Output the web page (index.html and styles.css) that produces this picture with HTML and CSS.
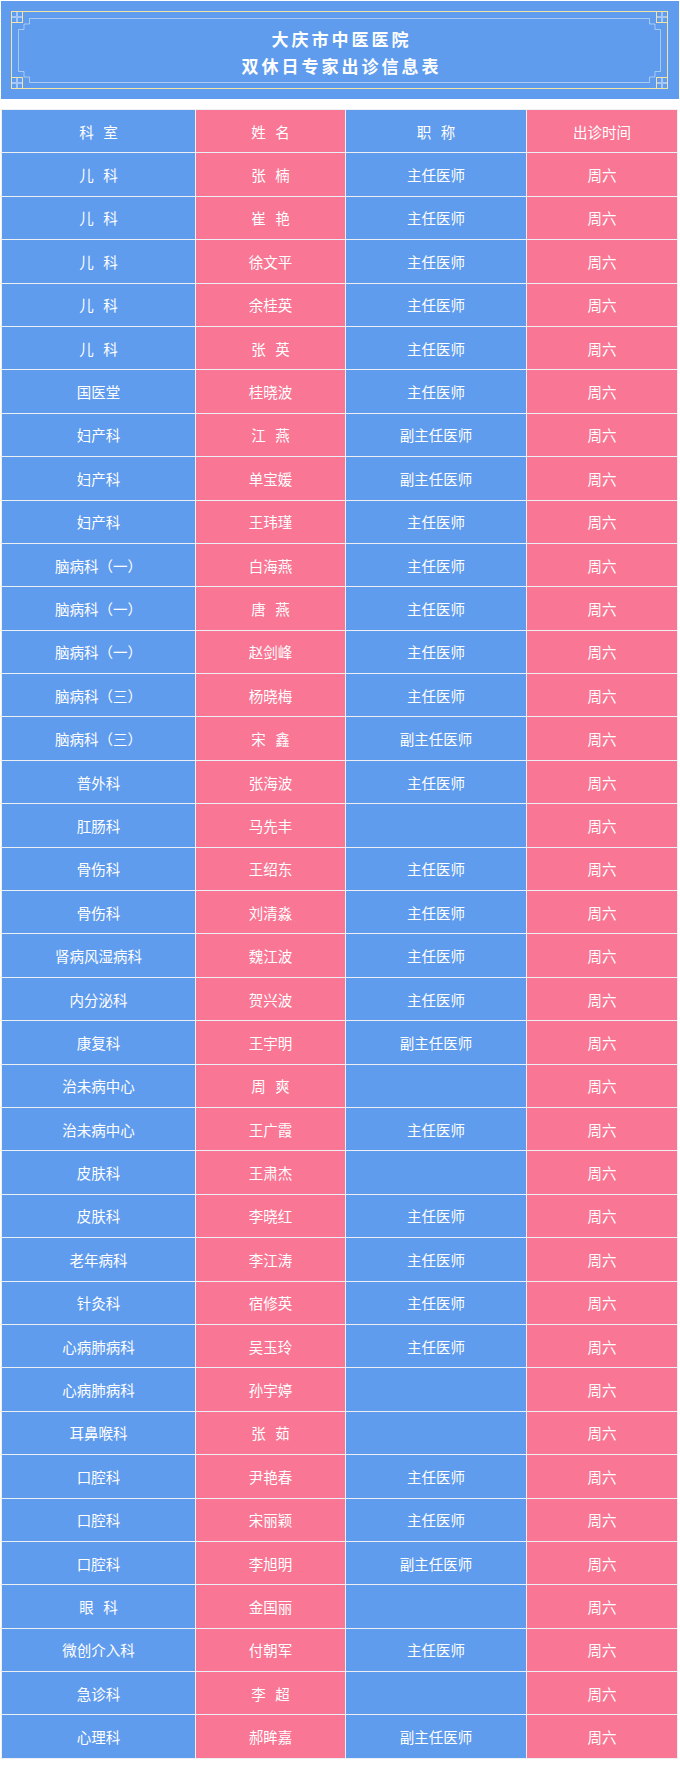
FILE: index.html
```html
<!DOCTYPE html>
<html lang="zh-CN">
<head>
<meta charset="utf-8">
<title>大庆市中医医院 双休日专家出诊信息表</title>
<link rel="stylesheet" href="styles.css">
</head>
<body>
<header class="banner">
  <svg class="frame" width="678" height="98" viewBox="0 0 678 98" aria-hidden="true">
    <path class="inner" d="M28.5 17.5 H648.5 V23 H654 V28.5 H659.5 V70.5 H654 V76 H648.5 V81.5 H28.5 V76 H23 V70.5 H17.5 V28.5 H23 V23 H28.5 Z"/>
    <path class="cross" d="M10.5 16 H21.5 M16 10.5 V21.5 M655.5 16 H666.5 M661 10.5 V21.5 M10.5 82 H21.5 M16 76.5 V87.5 M655.5 82 H666.5 M661 76.5 V87.5"/>
    <path class="outer" d="M21.5 10.5 H655.5 M21.5 87.5 H655.5 M10.5 21.5 V76.5 M666.5 21.5 V76.5"/>
    <rect class="outer" x="10.5" y="10.5" width="11" height="11"/>
    <rect class="outer" x="655.5" y="10.5" width="11" height="11"/>
    <rect class="outer" x="10.5" y="76.5" width="11" height="11"/>
    <rect class="outer" x="655.5" y="76.5" width="11" height="11"/>
  </svg>
  <h1 class="title"><span>大庆市中医医院</span><span>双休日专家出诊信息表</span></h1>
</header>

<div class="sheet">
  <div class="cell b">科 室</div><div class="cell p">姓 名</div><div class="cell b">职 称</div><div class="cell p">出诊时间</div>
  <div class="cell b">儿 科</div><div class="cell p">张 楠</div><div class="cell b">主任医师</div><div class="cell p">周六</div>
  <div class="cell b">儿 科</div><div class="cell p">崔 艳</div><div class="cell b">主任医师</div><div class="cell p">周六</div>
  <div class="cell b">儿 科</div><div class="cell p">徐文平</div><div class="cell b">主任医师</div><div class="cell p">周六</div>
  <div class="cell b">儿 科</div><div class="cell p">余桂英</div><div class="cell b">主任医师</div><div class="cell p">周六</div>
  <div class="cell b">儿 科</div><div class="cell p">张 英</div><div class="cell b">主任医师</div><div class="cell p">周六</div>
  <div class="cell b">国医堂</div><div class="cell p">桂晓波</div><div class="cell b">主任医师</div><div class="cell p">周六</div>
  <div class="cell b">妇产科</div><div class="cell p">江 燕</div><div class="cell b">副主任医师</div><div class="cell p">周六</div>
  <div class="cell b">妇产科</div><div class="cell p">单宝媛</div><div class="cell b">副主任医师</div><div class="cell p">周六</div>
  <div class="cell b">妇产科</div><div class="cell p">王玮瑾</div><div class="cell b">主任医师</div><div class="cell p">周六</div>
  <div class="cell b">脑病科（一）</div><div class="cell p">白海燕</div><div class="cell b">主任医师</div><div class="cell p">周六</div>
  <div class="cell b">脑病科（一）</div><div class="cell p">唐 燕</div><div class="cell b">主任医师</div><div class="cell p">周六</div>
  <div class="cell b">脑病科（一）</div><div class="cell p">赵剑峰</div><div class="cell b">主任医师</div><div class="cell p">周六</div>
  <div class="cell b">脑病科（三）</div><div class="cell p">杨晓梅</div><div class="cell b">主任医师</div><div class="cell p">周六</div>
  <div class="cell b">脑病科（三）</div><div class="cell p">宋 鑫</div><div class="cell b">副主任医师</div><div class="cell p">周六</div>
  <div class="cell b">普外科</div><div class="cell p">张海波</div><div class="cell b">主任医师</div><div class="cell p">周六</div>
  <div class="cell b">肛肠科</div><div class="cell p">马先丰</div><div class="cell b"></div><div class="cell p">周六</div>
  <div class="cell b">骨伤科</div><div class="cell p">王绍东</div><div class="cell b">主任医师</div><div class="cell p">周六</div>
  <div class="cell b">骨伤科</div><div class="cell p">刘清淼</div><div class="cell b">主任医师</div><div class="cell p">周六</div>
  <div class="cell b">肾病风湿病科</div><div class="cell p">魏江波</div><div class="cell b">主任医师</div><div class="cell p">周六</div>
  <div class="cell b">内分泌科</div><div class="cell p">贺兴波</div><div class="cell b">主任医师</div><div class="cell p">周六</div>
  <div class="cell b">康复科</div><div class="cell p">王宇明</div><div class="cell b">副主任医师</div><div class="cell p">周六</div>
  <div class="cell b">治未病中心</div><div class="cell p">周 爽</div><div class="cell b"></div><div class="cell p">周六</div>
  <div class="cell b">治未病中心</div><div class="cell p">王广霞</div><div class="cell b">主任医师</div><div class="cell p">周六</div>
  <div class="cell b">皮肤科</div><div class="cell p">王肃杰</div><div class="cell b"></div><div class="cell p">周六</div>
  <div class="cell b">皮肤科</div><div class="cell p">李晓红</div><div class="cell b">主任医师</div><div class="cell p">周六</div>
  <div class="cell b">老年病科</div><div class="cell p">李江涛</div><div class="cell b">主任医师</div><div class="cell p">周六</div>
  <div class="cell b">针灸科</div><div class="cell p">宿修英</div><div class="cell b">主任医师</div><div class="cell p">周六</div>
  <div class="cell b">心病肺病科</div><div class="cell p">吴玉玲</div><div class="cell b">主任医师</div><div class="cell p">周六</div>
  <div class="cell b">心病肺病科</div><div class="cell p">孙宇婷</div><div class="cell b"></div><div class="cell p">周六</div>
  <div class="cell b">耳鼻喉科</div><div class="cell p">张 茹</div><div class="cell b"></div><div class="cell p">周六</div>
  <div class="cell b">口腔科</div><div class="cell p">尹艳春</div><div class="cell b">主任医师</div><div class="cell p">周六</div>
  <div class="cell b">口腔科</div><div class="cell p">宋丽颖</div><div class="cell b">主任医师</div><div class="cell p">周六</div>
  <div class="cell b">口腔科</div><div class="cell p">李旭明</div><div class="cell b">副主任医师</div><div class="cell p">周六</div>
  <div class="cell b">眼 科</div><div class="cell p">金国丽</div><div class="cell b"></div><div class="cell p">周六</div>
  <div class="cell b">微创介入科</div><div class="cell p">付朝军</div><div class="cell b">主任医师</div><div class="cell p">周六</div>
  <div class="cell b">急诊科</div><div class="cell p">李 超</div><div class="cell b"></div><div class="cell p">周六</div>
  <div class="cell b">心理科</div><div class="cell p">郝眸嘉</div><div class="cell b">副主任医师</div><div class="cell p">周六</div>
</div>
</body>
</html>
```
FILE: styles.css
```css
html, body {
  margin: 0;
  padding: 0;
  background: #ffffff;
}

body {
  font-family: "Noto Sans CJK SC", "Noto Sans", sans-serif;
  color: #ffffff;
}

.banner {
  position: relative;
  margin: 1px 1px 0 1px;
  height: 98px;
  background: #5f9cee;
  box-sizing: border-box;
  padding-top: 24px;
}

.frame {
  position: absolute;
  left: 0;
  top: 0;
}

.frame .outer {
  fill: none;
  stroke: #f3e4a6;
  stroke-width: 1;
}

.frame .inner {
  fill: none;
  stroke: rgba(230, 236, 246, 0.55);
  stroke-width: 1;
}

.frame .cross {
  fill: none;
  stroke: rgba(255, 255, 255, 0.45);
  stroke-width: 2;
}

.title {
  position: relative;
  margin: 0;
  display: flex;
  flex-direction: column;
  align-items: center;
  font-size: 17px;
  font-weight: 700;
  line-height: 27px;
  letter-spacing: 3px;
  padding-left: 3px;
}

.sheet {
  margin: 10px 1px 0 1px;
  padding: 1px;
  display: grid;
  grid-template-columns: 193px 149px 180px 150px;
  grid-auto-rows: 42.4px;
  gap: 1px;
  background: #eceff4;
  width: max-content;
}

.cell {
  display: flex;
  align-items: center;
  justify-content: center;
  font-size: 14.5px;
  word-spacing: 6.5px;
  white-space: pre;
}

.b {
  background: #5f9cee;
}

.p {
  background: #f97694;
}
```
